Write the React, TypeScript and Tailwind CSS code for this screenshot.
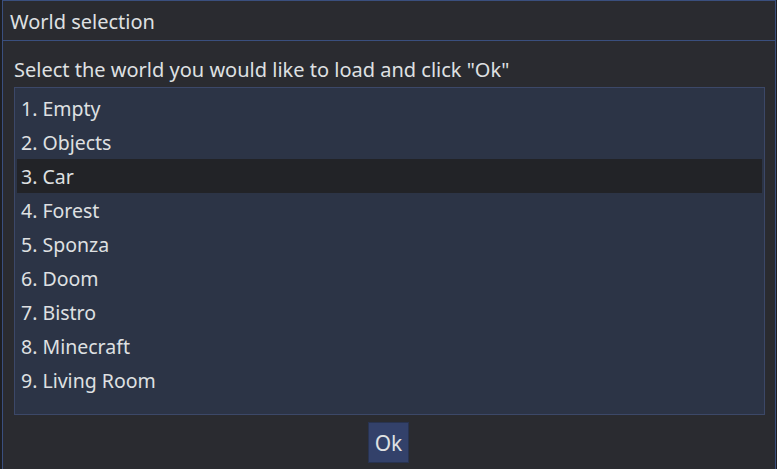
export default function App() {
  const worlds = ["1. Empty", "2. Objects", "3. Car", "4. Forest", "5. Sponza", "6. Doom", "7. Bistro", "8. Minecraft", "9. Living Room"];
  return (
    <div className="w-[777px] h-[469px] bg-[#1d1e22] pl-[2px] pr-[1px] overflow-hidden" style={{ fontFamily: '"Noto Sans", "Open Sans", sans-serif' }}>
      <div className="h-[480px] border-l border-r border-t border-[#3a4f7e] bg-[#2a2b30] flex flex-col text-[#dfe0e2]">
        <div className="h-[40px] shrink-0 border-b border-[#3a4f7e] flex items-center pl-[7px] text-[20px] pt-[2px]">World selection</div>
        <div className="pl-[11px] pr-[10px] pt-[16px] flex flex-col">
          <div className="text-[20px] leading-[26px] h-[30px]">Select the world you would like to load and click "Ok"</div>
          <div className="h-[328px] border border-[#3c4868] bg-[#2c3446] pt-[3px] px-[2px] flex flex-col">
            {worlds.map((w, i) => (
              <div key={w} className={`h-[34px] flex items-center pl-[4px] pt-[2px] text-[19.5px] ${i === 2 ? "bg-[#222327]" : ""}`}>{w}</div>
            ))}
          </div>
          <div className="flex justify-center pt-[7px]">
            <div className="ml-[-2px] w-[41px] h-[41px] bg-[#33416a] border border-[#283350] flex items-center justify-center pt-[2px] text-[21px]">Ok</div>
          </div>
        </div>
      </div>
    </div>
  );
}
